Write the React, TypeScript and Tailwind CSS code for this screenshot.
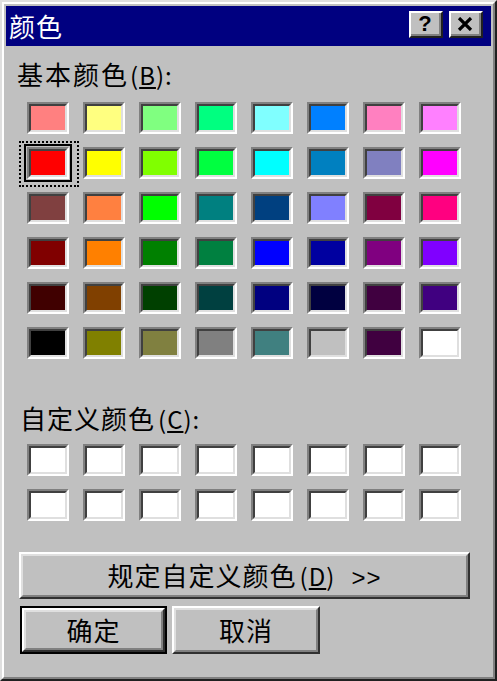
import type { ReactNode } from 'react'

const basicColors = [
  '#ff8080', '#ffff80', '#80ff80', '#00ff80', '#80ffff', '#0080ff', '#ff80c0', '#ff80ff',
  '#ff0000', '#ffff00', '#80ff00', '#00ff40', '#00ffff', '#0080c0', '#8080c0', '#ff00ff',
  '#804040', '#ff8040', '#00ff00', '#008080', '#004080', '#8080ff', '#800040', '#ff0080',
  '#800000', '#ff8000', '#008000', '#008040', '#0000ff', '#0000a0', '#800080', '#8000ff',
  '#400000', '#804000', '#004000', '#004040', '#000080', '#000040', '#400040', '#400080',
  '#000000', '#808000', '#808040', '#808080', '#408080', '#c0c0c0', '#400040', '#ffffff',
]

const customColors = Array.from({ length: 16 }, () => '#ffffff')

function Swatch({ color, selected }: { color: string; selected?: boolean }) {
  return (
    <div className="relative h-[32px] w-[42px]">
      {selected && (
        <span className="pointer-events-none absolute -top-[6px] -left-[8px] -right-[10px] -bottom-[8px] border-2 border-dotted border-black" />
      )}
      <div
        className={`h-full w-full border-2 border-t-[#808080] border-l-[#808080] border-r-white border-b-white ${
          selected ? 'outline-2 outline-offset-1 outline-black' : ''
        }`}
      >
        <div
          className="h-full w-full border-2 border-t-[#404040] border-l-[#404040] border-r-[#dfdfdf] border-b-[#dfdfdf]"
          style={{ backgroundColor: color }}
        />
      </div>
    </div>
  )
}

function RaisedButton({
  children,
  className = '',
  isDefault,
}: {
  children: ReactNode
  className?: string
  isDefault?: boolean
}) {
  return (
    <button
      type="button"
      className={`${className} ${isDefault ? 'border-2 border-black' : ''} bg-[#c0c0c0] p-0`}
    >
      <div className="flex h-full w-full border-2 border-t-white border-l-white border-r-[#303030] border-b-[#303030]">
        <div className="flex h-full w-full items-center justify-center border-2 border-t-[#dfdfdf] border-l-[#dfdfdf] border-r-[#808080] border-b-[#808080] text-[26px] leading-none tracking-[1px] text-black">
          {children}
        </div>
      </div>
    </button>
  )
}

function TitleButton({ children }: { children: ReactNode }) {
  return (
    <div className="h-[27px] w-[34px] border-2 border-t-white border-l-white border-r-[#202020] border-b-[#202020] bg-[#c0c0c0]">
      <div className="flex h-full w-full items-center justify-center border-r-2 border-b-2 border-[#808080]">
        {children}
      </div>
    </div>
  )
}

export default function App() {
  return (
    <div className="h-[681px] w-[497px] overflow-hidden bg-white font-['Noto_Sans_CJK_SC','Liberation_Sans',sans-serif]">
      <div className="box-border flex h-[681px] w-[497px] flex-col border-2 border-t-[#dfdfdf] border-l-[#dfdfdf] border-r-[#202020] border-b-[#202020] bg-[#c0c0c0]">
        <div className="flex h-full w-full flex-col border-2 border-t-white border-l-white border-r-[#808080] border-b-[#808080] p-[2px]">
          {/* title bar */}
          <div className="flex h-[40px] shrink-0 items-center justify-between bg-[#000080] pr-[8px] pl-[3px]">
            <span className="text-[26px] leading-none tracking-[1px] text-white">颜色</span>
            <div className="flex items-center gap-[6px] pb-[3px]">
              <TitleButton>
                <span className="font-['Liberation_Sans',sans-serif] text-[22px] leading-none font-bold text-black">?</span>
              </TitleButton>
              <TitleButton>
                <svg width="16" height="14" viewBox="0 0 16 14">
                  <path d="M2 1 L14 13 M14 1 L2 13" stroke="#000" strokeWidth="3.2" />
                </svg>
              </TitleButton>
            </div>
          </div>

          {/* basic colours */}
          <div className="mt-[14px] pl-[11px] text-[26px] leading-[28px] tracking-[2px] text-black">
            基本颜色<span className="ml-[1px] text-[24px] tracking-[1px]">(<span className="underline">B</span>):</span>
          </div>
          <div className="mt-[13px] grid w-fit grid-cols-8 gap-x-[14px] gap-y-[13px] pl-[21px]">
            {basicColors.map((c, i) => (
              <Swatch key={i} color={c} selected={i === 8} />
            ))}
          </div>

          {/* custom colours */}
          <div className="mt-[45px] pl-[14px] text-[26px] leading-[28px] tracking-[1px] text-black">
            自定义颜色<span className="ml-[3px] text-[24px]">(<span className="underline">C</span>):</span>
          </div>
          <div className="mt-[11px] grid w-fit grid-cols-8 gap-x-[14px] gap-y-[13px] pl-[21px]">
            {customColors.map((c, i) => (
              <Swatch key={i} color={c} />
            ))}
          </div>

          {/* buttons */}
          <div className="mt-[31px] pl-[13px]">
            <RaisedButton className="h-[47px] w-[451px]">
              <span>
                规定自定义颜色<span className="ml-[3px] text-[24px]">(<span className="underline">D</span>)</span>
                <span className="ml-[16px] font-['Liberation_Sans',sans-serif] text-[24px]">&gt;&gt;</span>
              </span>
            </RaisedButton>
          </div>
          <div className="mt-[7px] flex gap-[5px] pl-[14px]">
            <RaisedButton isDefault className="h-[48px] w-[147px]">
              确定
            </RaisedButton>
            <RaisedButton className="h-[48px] w-[148px]">取消</RaisedButton>
          </div>
        </div>
      </div>
    </div>
  )
}
